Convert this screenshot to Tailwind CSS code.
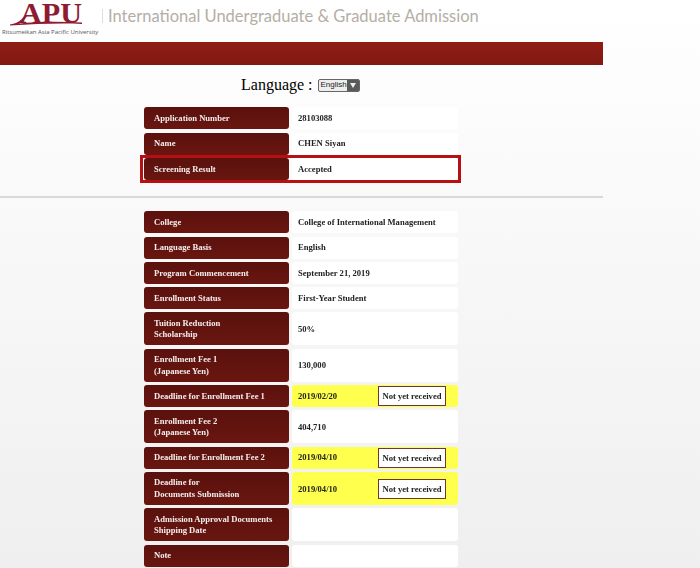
<!DOCTYPE html>
<html>
<head>
<meta charset="utf-8">
<script src="https://cdn.jsdelivr.net/npm/@tailwindcss/browser@4"></script>
</head>
<body class="m-0 w-[700px] h-[568px] overflow-hidden bg-gradient-to-b from-white to-[#efefef] font-['Liberation_Serif',serif]">
  <header class="h-[42px] flex items-start">
    <div class="w-[101px] h-[38px] relative shrink-0">
      <svg class="absolute left-0 top-0" width="100" height="28" viewBox="0 0 100 28">
        <text x="20" y="22.500" font-family="Liberation Serif" font-weight="700" font-size="30" fill="#8f1b33" textLength="62" lengthAdjust="spacingAndGlyphs">APU</text>
        <path d="M10 24.500 C16 23.500 21 21 25 15 L27 16 C24 21 21 23 18 23.800 C36 21.500 60 21.500 82 22.500 L82 24 C60 23 36 24 10 25.500Z" fill="#8f1b33"/>
      </svg>
      <span class="absolute left-[2px] top-[28px] text-[6px] leading-[8px] whitespace-nowrap text-[#555] font-['Open_Sans',sans-serif]">Ritsumeikan Asia Pacific University</span>
    </div>
    <div class="w-px h-[14px] bg-[#ddd] mt-[9px] ml-[1px] shrink-0"></div>
    <div class="ml-[5px] mt-[5px] text-[16.500px] leading-[22px] whitespace-nowrap text-[#b5aea6] font-['Lato',sans-serif]">International Undergraduate &amp; Graduate Admission</div>
  </header>
  <div class="w-[603px] h-[23px] bg-gradient-to-b from-[#8e1c14] to-[#821a12]"></div>
  <div class="w-[603px] h-[42.300px] flex items-center pl-[241px] pb-[2px]">
    <span class="text-[16px] text-black">Language :</span>
    <span class="ml-[5px] inline-flex items-center h-[13px] w-[42px] rounded-[2px] bg-[#eee] border border-[#666] overflow-hidden">
      <span class="flex-1 text-[8px] leading-[10px] pl-[2px] font-['Liberation_Sans',sans-serif] text-[#222]">English</span>
      <span class="w-[13px] h-full bg-[#5a5a5a] flex items-center justify-center"><svg width="6" height="5" viewBox="0 0 6 5"><path d="M0 0H6L3 5Z" fill="#eee"/></svg></span>
    </span>
  </div>
  <main class="w-[603px]">
    <div class="ml-[144px] w-[314px] flex flex-col gap-[3.300px] text-[8.600px] font-bold blur-[0.3px]">
      <div class="flex gap-[3px] h-[22px] [&>*]:pt-[0.6px]"><div class="w-[145px] rounded-[3px] bg-gradient-to-b from-[#5a110d] to-[#6a1610] text-[#f4eeee] flex items-center px-[10px]">Application Number</div><div class="flex-1 rounded-[3px] bg-white text-[#222] flex items-center px-[6px]">28103088</div></div>
      <div class="flex gap-[3px] h-[22px] [&>*]:pt-[0.6px]"><div class="w-[145px] rounded-[3px] bg-gradient-to-b from-[#5a110d] to-[#6a1610] text-[#f4eeee] flex items-center px-[10px]">Name</div><div class="flex-1 rounded-[3px] bg-white text-[#222] flex items-center px-[6px]">CHEN Siyan</div></div>
      <div class="flex gap-[3px] h-[22px] relative [&>*]:pt-[0.6px]"><div class="w-[145px] rounded-[3px] bg-gradient-to-b from-[#5a110d] to-[#6a1610] text-[#f4eeee] flex items-center px-[10px]">Screening Result</div><div class="flex-1 rounded-[3px] bg-white text-[#222] flex items-center px-[6px]">Accepted</div><div class="absolute -left-[4px] -right-[3px] -top-[2.500px] -bottom-[3px] border-[3px] border-[#b80f14]"></div></div>
    </div>
    <div class="mt-[16.600px] h-[2px] bg-[#d8d8d8]"></div>
    <div class="mt-[12.800px] ml-[144px] w-[314px] flex flex-col gap-[3.300px] text-[8.600px] font-bold blur-[0.3px]">
      <div class="flex gap-[3px] h-[22px] [&>*]:pt-[0.6px]"><div class="w-[145px] rounded-[3px] bg-gradient-to-b from-[#5a110d] to-[#6a1610] text-[#f4eeee] flex items-center px-[10px]">College</div><div class="flex-1 rounded-[3px] bg-white text-[#222] flex items-center px-[6px]">College of International Management</div></div>
      <div class="flex gap-[3px] h-[22px] [&>*]:pt-[0.6px]"><div class="w-[145px] rounded-[3px] bg-gradient-to-b from-[#5a110d] to-[#6a1610] text-[#f4eeee] flex items-center px-[10px]">Language Basis</div><div class="flex-1 rounded-[3px] bg-white text-[#222] flex items-center px-[6px]">English</div></div>
      <div class="flex gap-[3px] h-[22px] [&>*]:pt-[0.6px]"><div class="w-[145px] rounded-[3px] bg-gradient-to-b from-[#5a110d] to-[#6a1610] text-[#f4eeee] flex items-center px-[10px]">Program Commencement</div><div class="flex-1 rounded-[3px] bg-white text-[#222] flex items-center px-[6px]">September 21, 2019</div></div>
      <div class="flex gap-[3px] h-[22px] [&>*]:pt-[0.6px]"><div class="w-[145px] rounded-[3px] bg-gradient-to-b from-[#5a110d] to-[#6a1610] text-[#f4eeee] flex items-center px-[10px]">Enrollment Status</div><div class="flex-1 rounded-[3px] bg-white text-[#222] flex items-center px-[6px]">First-Year Student</div></div>
      <div class="flex gap-[3px] h-[33px] [&>*]:pt-[1px]"><div class="w-[145px] rounded-[3px] bg-gradient-to-b from-[#5a110d] to-[#6a1610] text-[#f4eeee] flex items-center px-[10px] leading-[11.500px]">Tuition Reduction<br>Scholarship</div><div class="flex-1 rounded-[3px] bg-white text-[#222] flex items-center px-[6px]">50%</div></div>
      <div class="flex gap-[3px] h-[33px] [&>*]:pt-[1px]"><div class="w-[145px] rounded-[3px] bg-gradient-to-b from-[#5a110d] to-[#6a1610] text-[#f4eeee] flex items-center px-[10px] leading-[11.500px]">Enrollment Fee 1<br>(Japanese Yen)</div><div class="flex-1 rounded-[3px] bg-white text-[#222] flex items-center px-[6px]">130,000</div></div>
      <div class="flex gap-[3px] h-[22px]"><div class="w-[145px] rounded-[3px] bg-gradient-to-b from-[#5a110d] to-[#6a1610] text-[#f4eeee] flex items-center px-[10px]">Deadline for Enrollment Fee 1</div><div class="flex-1 rounded-[3px] bg-[#ffff4d] text-[#222] flex items-center justify-between pl-[6px] pr-[12px]">2019/02/20<span class="w-[68px] h-[20px] bg-white border border-[#6b3a2a] text-center leading-[18px]">Not yet received</span></div></div>
      <div class="flex gap-[3px] h-[33px] [&>*]:pt-[1px]"><div class="w-[145px] rounded-[3px] bg-gradient-to-b from-[#5a110d] to-[#6a1610] text-[#f4eeee] flex items-center px-[10px] leading-[11.500px]">Enrollment Fee 2<br>(Japanese Yen)</div><div class="flex-1 rounded-[3px] bg-white text-[#222] flex items-center px-[6px]">404,710</div></div>
      <div class="flex gap-[3px] h-[22px]"><div class="w-[145px] rounded-[3px] bg-gradient-to-b from-[#5a110d] to-[#6a1610] text-[#f4eeee] flex items-center px-[10px]">Deadline for Enrollment Fee 2</div><div class="flex-1 rounded-[3px] bg-[#ffff4d] text-[#222] flex items-center justify-between pl-[6px] pr-[12px]">2019/04/10<span class="w-[68px] h-[20px] bg-white border border-[#6b3a2a] text-center leading-[18px]">Not yet received</span></div></div>
      <div class="flex gap-[3px] h-[33px] [&>*]:pt-[1px]"><div class="w-[145px] rounded-[3px] bg-gradient-to-b from-[#5a110d] to-[#6a1610] text-[#f4eeee] flex items-center px-[10px] leading-[11.500px]">Deadline for<br>Documents Submission</div><div class="flex-1 rounded-[3px] bg-[#ffff4d] text-[#222] flex items-center justify-between pl-[6px] pr-[12px]">2019/04/10<span class="w-[68px] h-[20px] bg-white border border-[#6b3a2a] text-center leading-[18px]">Not yet received</span></div></div>
      <div class="flex gap-[3px] h-[33px] [&>*]:pt-[1px]"><div class="w-[145px] rounded-[3px] bg-gradient-to-b from-[#5a110d] to-[#6a1610] text-[#f4eeee] flex items-center px-[10px] leading-[11.500px]">Admission Approval Documents<br>Shipping Date</div><div class="flex-1 rounded-[3px] bg-white"></div></div>
      <div class="flex gap-[3px] h-[22px] [&>*]:pt-[0.6px]"><div class="w-[145px] rounded-[3px] bg-gradient-to-b from-[#5a110d] to-[#6a1610] text-[#f4eeee] flex items-center px-[10px]">Note</div><div class="flex-1 rounded-[3px] bg-white"></div></div>
    </div>
  </main>
</body>
</html>
